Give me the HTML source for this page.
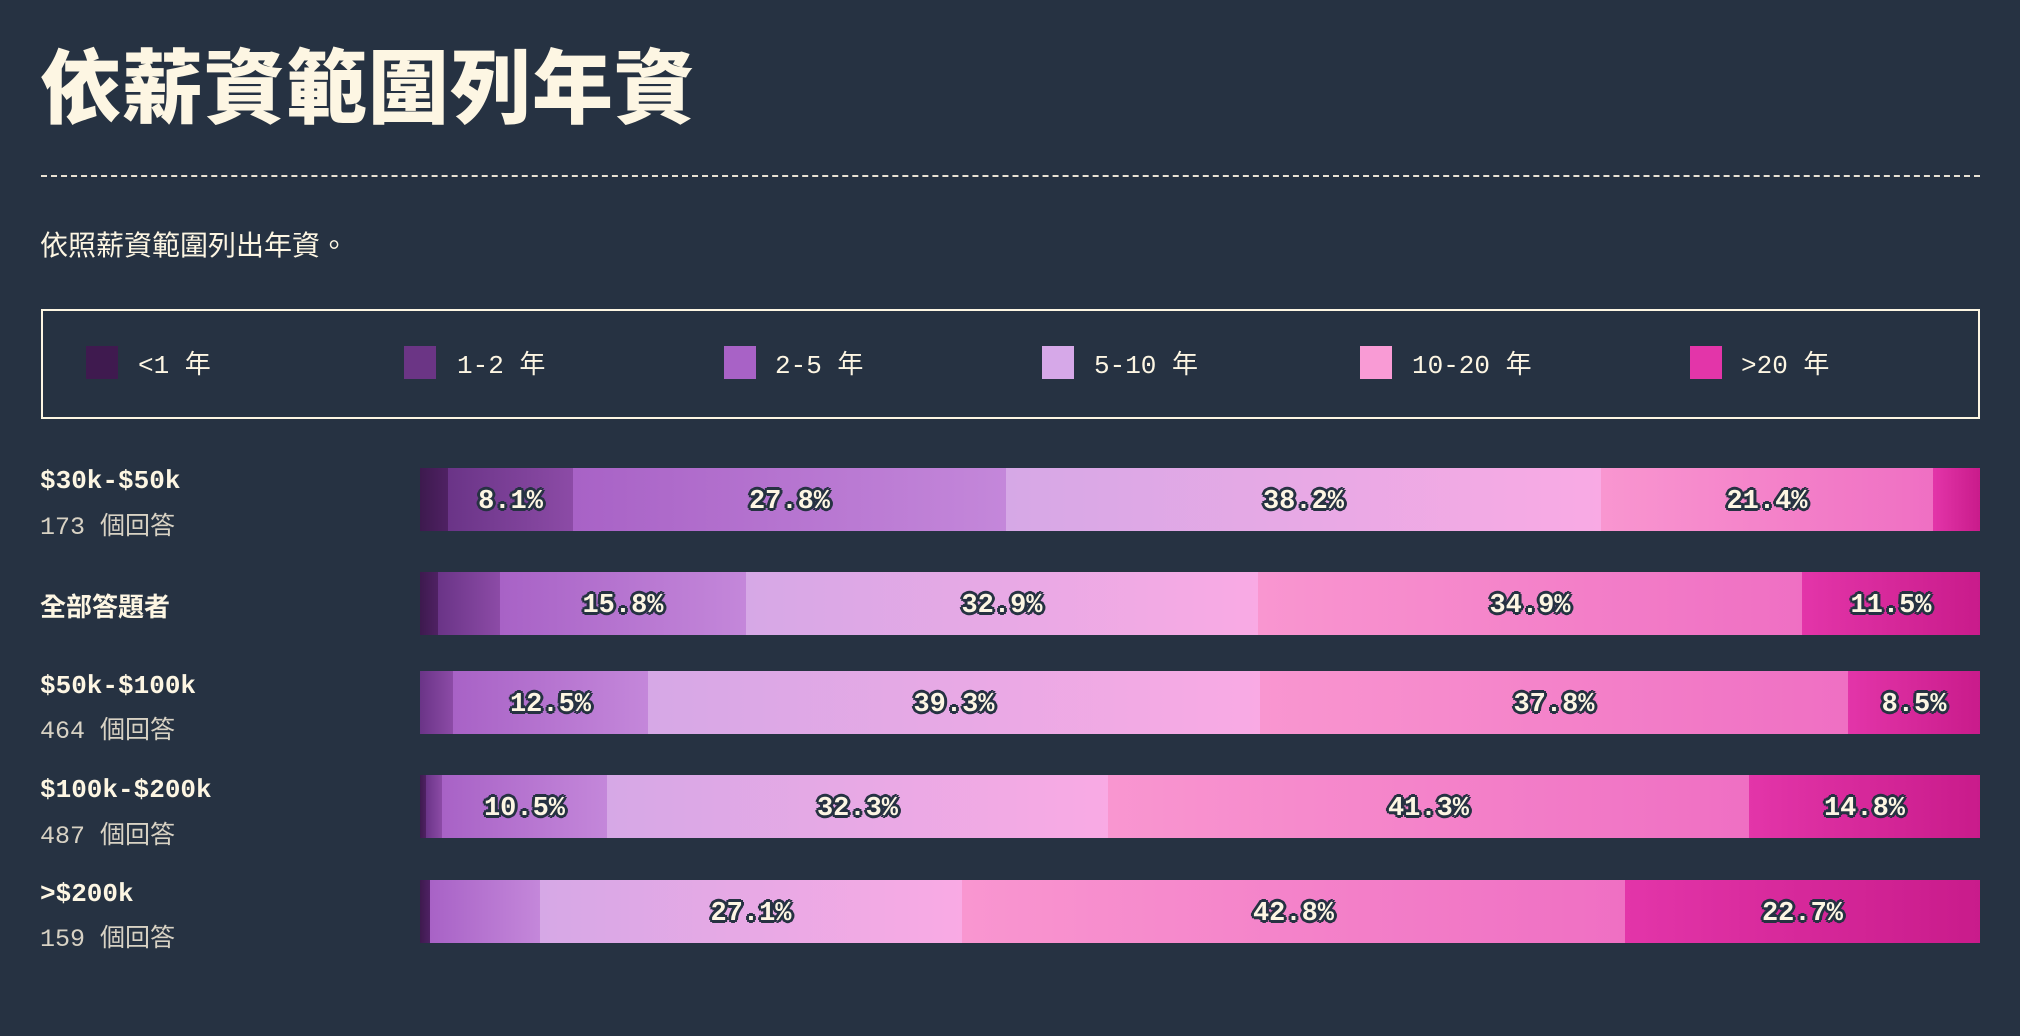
<!DOCTYPE html>
<html><head><meta charset="utf-8"><style>
body{margin:0;width:2020px;height:1036px;background:#263242;color:#fdf6e3;font-family:"Liberation Mono","Noto Sans CJK TC",monospace;position:relative;overflow:hidden}
.a{position:absolute;white-space:nowrap}
h1{position:absolute;left:40px;top:24px;margin:0;font-family:"Liberation Sans","Noto Sans CJK TC",sans-serif;font-weight:900;font-size:81px;letter-spacing:1px;color:#fdf6e3}
.dash{position:absolute;left:41px;top:175px;width:1939px;border-top:2px dashed #e8e2d4}
.sub{left:40px;top:224px;font-family:"Liberation Sans","Noto Sans CJK TC",sans-serif;font-size:28px}
.leg{position:absolute;left:41px;top:309px;width:1935px;height:106px;border:2px solid #fdf6e3}
.sw{position:absolute;top:346px;width:32px;height:33px}
.lt{top:344px;font-size:26px}
.lab{left:40px;font-weight:bold;font-size:26px}
.cnt{left:40px;font-size:25px;color:#d8d2c4}
.bar{position:absolute;left:420px;width:1560px;height:63px;display:flex}
.bar div{height:100%;display:flex;align-items:center;justify-content:center;font-weight:bold;font-size:27px;color:#fdf6e3;padding-top:4px;box-sizing:border-box;
text-shadow:-2px -2px 0 #263242,2px -2px 0 #263242,-2px 2px 0 #263242,2px 2px 0 #263242,0 3px 0 #263242,0 -3px 0 #263242,3px 0 0 #263242,-3px 0 0 #263242}
.c0{background:linear-gradient(90deg,#3d1a4e,#4f2163)}
.c1{background:linear-gradient(90deg,#6a3487,#8c4ba6)}
.c2{background:linear-gradient(90deg,#a862c6,#c487da)}
.c3{background:linear-gradient(90deg,#d6a8e6,#f9aae4)}
.c4{background:linear-gradient(90deg,#f996d0,#ef6fc3)}
.c5{background:linear-gradient(90deg,#e335a9,#c91b8b)}
</style></head><body>
<h1>依薪資範圍列年資</h1>
<div class="dash"></div>
<div class="a sub">依照薪資範圍列出年資。</div>
<div class="leg"></div>
<div class="sw" style="left:86px;background:#3f1a4f"></div><div class="a lt" style="left:138px">&lt;1 年</div>
<div class="sw" style="left:404px;background:#6b3585"></div><div class="a lt" style="left:457px">1-2 年</div>
<div class="sw" style="left:724px;background:#a862c6"></div><div class="a lt" style="left:775px">2-5 年</div>
<div class="sw" style="left:1042px;background:#d6a8e8"></div><div class="a lt" style="left:1094px">5-10 年</div>
<div class="sw" style="left:1360px;background:#f99bd5"></div><div class="a lt" style="left:1412px">10-20 年</div>
<div class="sw" style="left:1690px;background:#e335a9"></div><div class="a lt" style="left:1741px">&gt;20 年</div>

<div class="a lab" style="top:466px">$30k-$50k</div><div class="a cnt" style="top:506px">173 個回答</div>
<div class="bar" style="top:468px"><div class="c0" style="width:28px"></div><div class="c1" style="width:125px">8.1%</div><div class="c2" style="width:433px">27.8%</div><div class="c3" style="width:595px">38.2%</div><div class="c4" style="width:332px">21.4%</div><div class="c5" style="width:47px"></div></div>

<div class="a lab" style="top:587px">全部答題者</div>
<div class="bar" style="top:572px"><div class="c0" style="width:18px"></div><div class="c1" style="width:62px"></div><div class="c2" style="width:246px">15.8%</div><div class="c3" style="width:512px">32.9%</div><div class="c4" style="width:544px">34.9%</div><div class="c5" style="width:178px">11.5%</div></div>

<div class="a lab" style="top:671px">$50k-$100k</div><div class="a cnt" style="top:710px">464 個回答</div>
<div class="bar" style="top:671px"><div class="c1" style="width:33px"></div><div class="c2" style="width:195px">12.5%</div><div class="c3" style="width:612px">39.3%</div><div class="c4" style="width:588px">37.8%</div><div class="c5" style="width:132px">8.5%</div></div>

<div class="a lab" style="top:775px">$100k-$200k</div><div class="a cnt" style="top:815px">487 個回答</div>
<div class="bar" style="top:775px"><div class="c0" style="width:6px"></div><div class="c1" style="width:16px"></div><div class="c2" style="width:165px">10.5%</div><div class="c3" style="width:501px">32.3%</div><div class="c4" style="width:641px">41.3%</div><div class="c5" style="width:231px">14.8%</div></div>

<div class="a lab" style="top:879px">&gt;$200k</div><div class="a cnt" style="top:918px">159 個回答</div>
<div class="bar" style="top:880px"><div class="c0" style="width:10px"></div><div class="c2" style="width:110px"></div><div class="c3" style="width:422px">27.1%</div><div class="c4" style="width:663px">42.8%</div><div class="c5" style="width:355px">22.7%</div></div>
</body></html>
